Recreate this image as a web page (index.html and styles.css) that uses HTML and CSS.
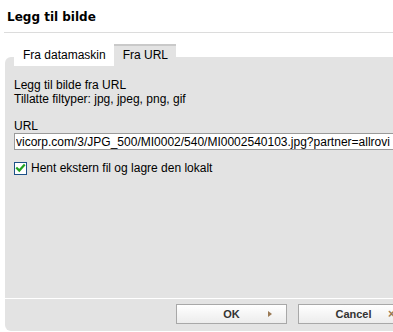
FILE: index.html
```html
<!DOCTYPE html>
<html lang="no">
<head>
<meta charset="utf-8">
<title>Legg til bilde</title>
<link rel="stylesheet" href="styles.css">
</head>
<body>
<div class="dialog">
  <h1 class="title">Legg til bilde</h1>
  <div class="panel">
    <div class="tabs">
      <div class="tab">Fra datamaskin</div>
      <div class="tab tab-active">Fra URL</div>
    </div>
    <div class="content">
      <p class="info">Legg til bilde fra URL<br>Tillatte filtyper: jpg, jpeg, png, gif</p>
      <label class="field-label" for="url">URL</label>
      <input class="url-input" id="url" type="text" value="vicorp.com/3/JPG_500/MI0002/540/MI0002540103.jpg?partner=allrovi">
      <div class="check-row">
        <span class="checkbox">
          <svg width="11" height="11" viewBox="0 0 11 11"><path d="M2 5.2 L4.3 7.6 L9 2.4" fill="none" stroke="#22a322" stroke-width="2.2" stroke-linecap="square"/></svg>
        </span>
        <span class="check-label">Hent ekstern fil og lagre den lokalt</span>
      </div>
    </div>
  </div>
  <div class="footer">
    <button class="btn" type="button"><span class="btn-text">OK</span><span class="arrow"></span></button>
    <button class="btn" type="button"><span class="btn-text">Cancel</span><span class="xmark">×</span></button>
  </div>
</div>
</body>
</html>
```

FILE: styles.css
```css
html, body {
  margin: 0;
  padding: 0;
  background: #fff;
  overflow: hidden;
}
.dialog {
  width: 420px;
  font-family: "Liberation Sans", Arial, sans-serif;
  font-size: 12px;
  color: #000;
}
.title {
  margin: 0 0 0 4px;
  padding: 10px 3px 8px;
  font-family: "DejaVu Sans", Verdana, sans-serif;
  font-weight: bold;
  font-size: 12px;
  line-height: 14px;
  border-bottom: 1px solid #dcdcdc;
}
.panel {
  display: flow-root;
  margin: 24px 0 0 5px;
  background: #e3e3e3;
  border-top-left-radius: 6px;
  height: 241px;
}
.tabs {
  display: flex;
  margin: -13px 0 0 9px;
  height: 22px;
}
.tab {
  background: #fff;
  padding: 0 8px 0 9px;
  line-height: 22px;
  height: 22px;
  box-sizing: border-box;
}
.tab-active {
  background: #e3e3e3;
  border-top: 2px solid #c9c9c9;
  line-height: 19px;
  padding: 0 8px 0 9px;
}
.content {
  padding: 12px 0 0 9px;
}
.info {
  margin: 0;
  line-height: 14px;
}
.field-label {
  display: block;
  margin-top: 14px;
  line-height: 13px;
}
.url-input {
  display: block;
  box-sizing: border-box;
  width: 420px;
  height: 17px;
  margin: 0;
  padding: 0 1px;
  border: 1px solid #9a9a9a;
  background: #fff;
  font-family: "Liberation Sans", Arial, sans-serif;
  font-size: 12px;
  color: #000;
  outline: none;
}
.check-row {
  display: flex;
  align-items: center;
  margin-top: 11px;
  gap: 4px;
}
.checkbox {
  width: 13px;
  height: 13px;
  box-sizing: border-box;
  border: 1px solid #1d5188;
  background: #fff;
  display: flex;
  align-items: center;
  justify-content: center;
}
.checkbox svg {
  display: block;
}
.check-label {
  line-height: 14px;
}
.footer {
  margin: 1px 0 0 5px;
  background: #e3e3e3;
  border-bottom-left-radius: 6px;
  height: 32px;
  box-sizing: border-box;
  display: flex;
  justify-content: flex-end;
  align-items: flex-start;
  padding: 5px 11px 0 0;
  gap: 11px;
}
.btn {
  position: relative;
  width: 111px;
  height: 20px;
  margin: 0;
  padding: 0;
  border: 1px solid #a8a8a8;
  background: linear-gradient(#ffffff, #ececec);
  font-family: "Liberation Sans", Arial, sans-serif;
  font-weight: bold;
  font-size: 11px;
  color: #333;
  display: flex;
  align-items: center;
  justify-content: center;
}
.arrow {
  position: absolute;
  right: 14px;
  top: 6px;
  width: 0;
  height: 0;
  border-top: 3.5px solid transparent;
  border-bottom: 3.5px solid transparent;
  border-left: 4px solid #9b7a55;
}
.xmark {
  position: absolute;
  right: 13px;
  top: 2px;
  font-size: 12px;
  color: #9b7a55;
  font-weight: bold;
}
```
